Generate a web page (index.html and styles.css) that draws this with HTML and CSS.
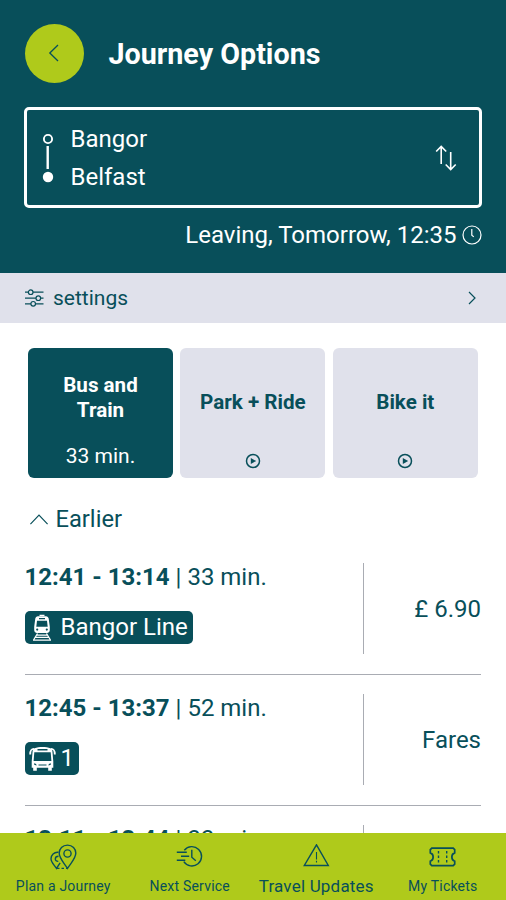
FILE: index.html
```html
<!DOCTYPE html>
<html lang="en">
<head>
<meta charset="utf-8">
<meta name="viewport" content="width=device-width, initial-scale=1">
<title>Journey Options</title>
<link rel="stylesheet" href="styles.css">
</head>
<body>
<div class="app">
  <header class="header">
    <div class="title-row">
      <button class="back" aria-label="Back">
        <svg width="12" height="18" viewBox="0 0 12 18"><path d="M10 1 1.800 9 10 17"/></svg>
      </button>
      <h1 class="title">Journey Options</h1>
    </div>
    <section class="route">
      <svg class="route-line" width="12" height="50" viewBox="0 0 12 50">
        <circle cx="6" cy="6" r="4.100" fill="none" stroke="#fff" stroke-width="1.900"/>
        <path d="M5.700 13V36" stroke="#fff" stroke-width="2.400"/>
        <circle cx="6" cy="44" r="5.200" fill="#fff"/>
      </svg>
      <div class="stops"><span class="stop">Bangor</span><span class="stop">Belfast</span></div>
      <svg class="swap" width="22" height="26" viewBox="0 0 22 26"><path d="M6.200 19V1.500M1.200 6.500l5-5 5 5M15.700 7v17.500M10.700 19.500l5 5 5-5"/></svg>
    </section>
    <div class="departure">
      <span class="departure-text">Leaving, Tomorrow, 12:35</span>
      <svg width="20" height="20" viewBox="0 0 20 20"><circle cx="10" cy="10" r="9"/><path d="M9.800 4v6.300l2 1.600"/></svg>
    </div>
  </header>
  <div class="settings">
    <svg width="19" height="18" viewBox="0 0 19 18"><path d="M0 3.200h3.400M8 3.200h10.500M0 9.200h11M15.600 9.200h2.900M0 14.800h6M10.500 14.800h8"/><circle cx="5.700" cy="3.200" r="2.300"/><circle cx="13.300" cy="9.200" r="2.300"/><circle cx="8.200" cy="14.800" r="2.300"/></svg>
    <span class="settings-text">settings</span>
    <svg class="settings-arrow" width="8" height="14" viewBox="0 0 8 14"><path d="m1 1 6 6-6 6"/></svg>
  </div>
  <main class="content">
    <div class="modes">
      <div class="mode mode-active"><strong class="mode-name">Bus and Train</strong><span class="mode-time">33 min.</span></div>
      <div class="mode"><strong class="mode-name">Park + Ride</strong>
        <svg class="play" width="16" height="16" viewBox="0 0 16 16"><circle cx="8" cy="8" r="6.500"/><path d="M5.800 4.900v6.200L11.200 8z"/></svg></div>
      <div class="mode"><strong class="mode-name">Bike it</strong>
        <svg class="play" width="16" height="16" viewBox="0 0 16 16"><circle cx="8" cy="8" r="6.500"/><path d="M5.800 4.900v6.200L11.200 8z"/></svg></div>
    </div>
    <div class="earlier">
      <svg width="18" height="11" viewBox="0 0 18 11"><path d="M.4 10.200 9 1.200l8.600 9"/></svg>
      <span class="earlier-text">Earlier</span>
    </div>
    <div class="journeys">
      <article class="journey">
        <div class="details">
          <div class="times"><b class="clock">12:41 - 13:14</b><span class="duration">| 33 min.</span></div>
          <div class="badge badge-train">
            <svg width="20" height="28" viewBox="0 0 20 28">
              <path fill="#fff" fill-rule="evenodd" d="M6 2.200h8c1.500 0 2.400.9 2.700 2.400l1.100 8.200v3.200c0 1.700-1.100 2.900-2.800 2.900H5c-1.700 0-2.800-1.200-2.800-2.900v-3.200l1.100-8.200C3.600 3.100 4.500 2.200 6 2.200zM7 3.900v1.300h6V3.900zM5 6.700l-.7 6.100h11.400L15 6.700zM5.200 14.500a1.100 1.100 0 1 0 0 2.200 1.100 1.100 0 0 0 0-2.200zM14.800 14.500a1.100 1.100 0 1 0 0 2.200 1.100 1.100 0 0 0 0-2.200z"/>
              <path fill="none" stroke="#fff" stroke-width="1.300" d="M7.500 1.300h5M5.500 19.500l-4 6.500M14.500 19.500l4 6.500M4.700 21.200h10.600M3.400 23.300h13.200M1 26.200h18"/>
            </svg>
            <span class="badge-text">Bangor Line</span>
          </div>
        </div>
        <div class="fare">£ 6.90</div>
      </article>
      <article class="journey">
        <div class="details">
          <div class="times"><b class="clock">12:45 - 13:37</b><span class="duration">| 52 min.</span></div>
          <div class="badge badge-bus">
            <svg width="27" height="26" viewBox="0 0 27 26">
              <path fill="#fff" fill-rule="evenodd" d="M5.500 2.200C10 .6 17 .6 21.500 2.200c1.300.5 1.700 1.400 1.900 3l.9 10.300v6.300h-1.500v3h-3.600v-3H7.800v3H4.200v-3H2.700v-6.300l.9-10.300c.2-1.600.6-2.500 1.900-3zM8.500 3v1.600h10V3zM5.300 6.300 4.600 15h17.800l-.7-8.700zM5.200 17.200v1.500l2.300.7c.2-1.100-.8-2-2.300-2.200zM21.800 17.200c-1.500.2-2.500 1.100-2.300 2.200l2.300-.7zM9.500 18.600v.8h8v-.8z"/>
              <path fill="none" stroke="#fff" stroke-width="1.900" d="M5 2.900C2.200 2.900 1.200 4 1.200 8.500M22 2.900c2.800 0 3.800 1.100 3.800 5.600"/>
            </svg>
            <span class="badge-text">1</span>
          </div>
        </div>
        <div class="fare">Fares</div>
      </article>
      <article class="journey">
        <div class="details">
          <div class="times"><b class="clock">13:11 - 13:44</b><span class="duration">| 33 min.</span></div>
        </div>
        <div class="fare"></div>
      </article>
    </div>
  </main>
  <nav class="nav">
    <a class="tab">
      <svg width="27" height="26" viewBox="0 0 27 26"><path d="M17.500 1.100c-5 0-8.300 3.500-8.300 8 0 5.500 4.800 9.700 8.300 15.300 3.500-5.600 8.300-9.800 8.300-15.300 0-4.500-3.300-8-8.300-8z"/><circle cx="17.500" cy="9.500" r="3.600"/><path d="M8.500 8.300C4 7.800 1 11 1 14.800c0 3.600 3.200 6 5.500 9.600l3.600-5.500M8.500 12.200c-2 0-3.200 1.200-3.200 2.700s1.200 2.600 3 2.500"/><path stroke-dasharray="2.500 2" d="M7 24.400h10.500"/></svg>
      <span class="tab-text">Plan a Journey</span>
    </a>
    <a class="tab">
      <svg width="27" height="26" viewBox="0 0 27 26"><path d="M8.300 6.200a9.700 9.700 0 1 1-.5 11.500M15.800 5.800v7.500l4 3.500M.8 8.300h10M5 12.200h8.200M.8 16.200h8.500"/></svg>
      <span class="tab-text">Next Service</span>
    </a>
    <a class="tab">
      <svg width="27" height="26" viewBox="0 0 27 26"><path d="M13.500 .8 25.300 21.500H1.300z"/><path stroke-width="1.100" d="M13.500 8v7.500M13.500 16.700v1.800"/></svg>
      <span class="tab-text tab-text-large">Travel Updates</span>
    </a>
    <a class="tab">
      <svg width="27" height="26" viewBox="0 0 27 26"><path stroke-width="1.700" d="M2.800 4.200h21.400l1.500 1.500v3.200c-3.800 1.300-3.800 7 0 8.300v3L24.200 21.700H2.800l-1.500-1.500v-3c3.800-1.300 3.800-7 0-8.300V5.700z"/><path stroke-dasharray="2.500 2" d="M9.500 7v12.500M17.700 7v12.500"/></svg>
      <span class="tab-text">My Tickets</span>
    </a>
  </nav>
</div>
</body>
</html>
```

FILE: styles.css
```css
* { box-sizing: border-box; }
body { margin: 0; background: #fff; color: #084f5a; font-family: Roboto, "Liberation Sans", sans-serif; }
svg { display: block; flex: none; fill: none; }
.app { display: flex; flex-direction: column; width: 506px; height: 900px; overflow: hidden; }

.header { flex: none; height: 273px; padding: 23.5px 24.5px 0; background: #084f5a; color: #fff; }
.title-row { display: flex; align-items: center; gap: 25px; height: 59px; }
.back { display: flex; align-items: center; justify-content: center; width: 59px; height: 59px; padding: 0; border: 0; border-radius: 50%; background: #afca1b; }
.back svg { stroke: #084f5a; stroke-width: 1.3; }
.title { margin: 2px 0 0; font-size: 28.7px; line-height: 34px; font-weight: 700; white-space: nowrap; }
.route { display: flex; align-items: center; height: 101px; margin: 24.5px 0 0 -.5px; padding: 0 21.5px 0 15px; border: 3px solid #fff; border-radius: 5px; }
.stops { display: flex; flex-direction: column; margin-left: 16.5px; }
.stop { font-size: 24px; line-height: 38px; }
.swap { margin-left: auto; stroke: #fff; stroke-width: 1.6; }
.departure { display: flex; align-items: center; justify-content: flex-end; gap: 5px; height: 32px; margin-top: 10.5px; }
.departure-text { font-size: 24px; line-height: 32px; white-space: nowrap; }
.departure svg { stroke: #fff; stroke-width: 1.2; }

.settings { display: flex; flex: none; align-items: center; height: 49.5px; padding: 0 30px 0 25px; background: #e0e1eb; }
.settings svg { stroke: #084f5a; stroke-width: 1.2; }
.settings-text { margin-left: 9px; font-size: 21px; line-height: 26px; }
.settings .settings-arrow { margin-left: auto; }

.content { flex: 1; min-height: 0; padding: 25px 25px 0 24.5px; overflow: hidden; }
.modes { display: grid; grid-template-columns: repeat(3, 145px); gap: 7.4px; padding-left: 3.5px; }
.mode { display: flex; flex-direction: column; align-items: center; height: 130.5px; padding: 0 18px; border-radius: 6px; background: #e0e1eb; text-align: center; }
.mode-active { padding: 0 30px; background: #084f5a; color: #fff; }
.mode-name { display: flex; align-items: center; height: 50px; margin-top: 30px; font-size: 20.6px; line-height: 25px; }
.mode-active .mode-name { margin-top: 25.5px; }
.mode:not(.mode-active) .mode-name { white-space: nowrap; }
.mode-time { margin-top: 21px; font-size: 21px; line-height: 25px; white-space: nowrap; }
.play { margin-top: 25.5px; }
.play circle { stroke: #084f5a; stroke-width: 1.5; }
.play path { fill: #084f5a; }
.earlier { display: flex; align-items: center; gap: 8px; height: 30px; margin-top: 26px; padding-left: 5px; }
.earlier svg { stroke: #084f5a; stroke-width: 1.2; }
.earlier-text { font-size: 23.7px; }

.journeys { margin-top: 10px; }
.journey { display: grid; grid-template-columns: 338.5px 1fr; height: 131px; padding: 19px 0; border-bottom: 1px solid #a9acb3; }
.times { display: flex; gap: 6px; height: 28px; font-size: 24px; line-height: 28px; white-space: nowrap; }
.clock { font-weight: 700; }
.badge { display: inline-flex; align-items: center; height: 33px; margin-top: 20px; border-radius: 5px; background: #084f5a; color: #fff; }
.badge-train { padding: 0 5px 0 7px; gap: 9px; }
.badge-bus { padding: 0 4.5px 0 4px; gap: 5px; }
.badge-text { font-size: 24px; line-height: 33px; white-space: nowrap; }
.fare { display: flex; align-items: center; justify-content: flex-end; height: 91px; border-left: 1px solid #a9acb3; font-size: 24px; }

.nav { display: grid; flex: none; grid-template-columns: repeat(4, 1fr); height: 67px; background: #afca1b; }
.tab { display: flex; flex-direction: column; align-items: center; padding-top: 11px; }
.tab svg { stroke: #084f5a; stroke-width: 1.4; }
.tab-text { margin-top: 5.5px; font-size: 14px; line-height: 20px; letter-spacing: .2px; white-space: nowrap; }
.tab-text-large { font-size: 17px; }
```
